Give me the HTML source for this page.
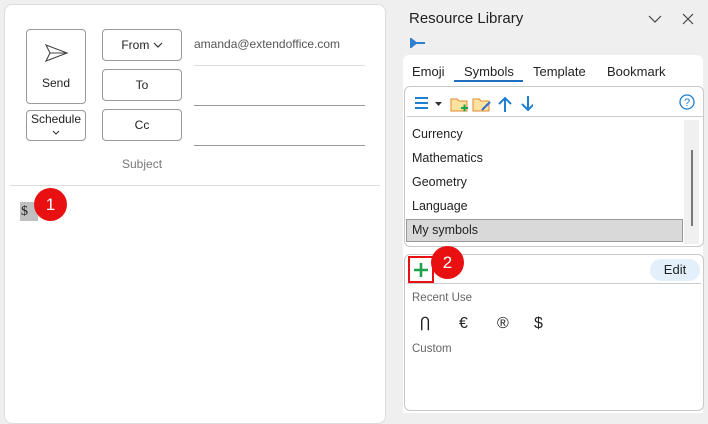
<!DOCTYPE html>
<html><head><style>
*{box-sizing:border-box;margin:0;padding:0}
body{width:708px;height:413px;background:#efefef;font-family:"Segoe UI","Liberation Sans",sans-serif;font-size:12px;color:#222;position:relative;overflow:hidden}
.a{position:absolute}
.card{left:4px;top:4px;width:382px;height:420px;background:#fff;border:1px solid #ddd;border-radius:8px}
.btn{position:absolute;border:1px solid #999;border-radius:4px;background:#fff;text-align:center;font-size:12px}
.line{position:absolute;height:1px;background:#999}
.box{position:absolute;border:1px solid #c8c8c8;border-radius:6px;background:#fff}
.item{position:absolute;left:412px;font-size:12.5px}
</style></head><body>
<div class="a card"></div>
<div class="btn" style="left:26px;top:29px;width:60px;height:75px">
<svg width="24" height="18" viewBox="0 0 24 18" style="position:absolute;left:18px;top:14px"><path d="M1 1 L22 9 L1 17 L5 9 Z M5 9 H22" fill="none" stroke="#444" stroke-width="1.1"/></svg>
<div style="position:absolute;top:46px;width:100%">Send</div></div>
<div class="btn" style="left:26px;top:110px;width:60px;height:31px;line-height:14px;padding-top:1px">Schedule<br><svg width="10" height="8"><path d="M2 2 L5 5 L8 2" fill="none" stroke="#333" stroke-width="1.1"/></svg></div>
<div class="btn" style="left:102px;top:29px;width:80px;height:32px;line-height:30px">From <svg width="10" height="8"><path d="M1 2 L5 6 L9 2" fill="none" stroke="#333" stroke-width="1.2"/></svg></div>
<div class="btn" style="left:102px;top:69px;width:80px;height:32px;line-height:30px">To</div>
<div class="btn" style="left:102px;top:109px;width:80px;height:32px;line-height:30px">Cc</div>
<div class="a" style="left:194px;top:37px;color:#555;font-size:12px">amanda@extendoffice.com</div>
<div class="line" style="left:194px;top:65px;width:171px;background:#ddd"></div>
<div class="line" style="left:194px;top:105px;width:171px"></div>
<div class="line" style="left:194px;top:145px;width:171px"></div>
<div class="a" style="left:122px;top:157px;color:#777">Subject</div>
<div class="line" style="left:10px;top:185px;width:370px;background:#ddd"></div>
<div class="a" style="left:20px;top:202px;width:18px;height:19px;background:#c0c0c0;font-family:'Liberation Serif',serif;font-size:14px;line-height:19px;padding-left:1px">$</div>
<div class="a" style="left:34px;top:188px;width:33px;height:33px;border-radius:50%;background:#e81010;color:#fff;font-size:17px;text-align:center;line-height:33px">1</div>

<div class="a" style="left:409px;top:10px;font-size:15px;color:#222">Resource Library</div>
<svg class="a" style="left:648px;top:14px" width="14" height="10"><path d="M1 2 L7 8 L13 2" fill="none" stroke="#444" stroke-width="1.2"/></svg>
<svg class="a" style="left:682px;top:13px" width="12" height="12"><path d="M1 1 L11 11 M11 1 L1 11" stroke="#444" stroke-width="1.2"/></svg>
<svg class="a" style="left:410px;top:38px" width="16" height="10"><path d="M1 1 V9 L6 5 Z M6 5 H15" fill="#2f7fd0" stroke="#2f7fd0" stroke-width="2"/></svg>
<div class="a" style="left:403px;top:55px;width:300px;height:358px;background:#fff;border-radius:6px 6px 0 0"></div>
<div class="a" style="left:412px;top:64px;font-size:13px">Emoji</div>
<div class="a" style="left:464px;top:64px;font-size:13px">Symbols</div>
<div class="a" style="left:454px;top:80px;width:69px;height:2px;background:#1f6fc0"></div>
<div class="a" style="left:533px;top:64px;font-size:13px">Template</div>
<div class="a" style="left:607px;top:64px;font-size:13px">Bookmark</div>
<div class="box" style="left:404px;top:86px;width:300px;height:161px"></div>
<svg class="a" style="left:413px;top:95px" width="120" height="18">
<path d="M2 3 H15 M2 8 H15 M2 13 H15" stroke="#1f7fd0" stroke-width="2"/>
<path d="M22 7 H29 L25.5 11 Z" fill="#333"/>
<path d="M38 4 H44 L46 6 H54 V16 H38 Z" fill="#fde2a0" stroke="#e08a2a"/>
<path d="M48 13 H55 M51.5 9.5 V16.5" stroke="#1aa34a" stroke-width="2"/>
<path d="M60 4 H66 L68 6 H76 V16 H60 Z" fill="#fde2a0" stroke="#e08a2a"/>
<path d="M69 15 L77 7" stroke="#2f6fd0" stroke-width="2"/>
<path d="M92 17 V3 M86 9 L92 3 L98 9" fill="none" stroke="#1f7fd0" stroke-width="2"/>
<path d="M115 1 V15 M109 9 L115 15 L121 9" fill="none" stroke="#1f7fd0" stroke-width="2"/>
</svg>
<svg class="a" style="left:679px;top:94px" width="16" height="16"><circle cx="8" cy="8" r="7" fill="none" stroke="#1f7fd0" stroke-width="1.3"/><text x="8" y="12" font-size="11" text-anchor="middle" fill="#1f7fd0" font-family="Liberation Sans">?</text></svg>
<div class="a" style="left:407px;top:116px;width:296px;height:1px;background:#ccc"></div>
<div class="a" style="left:684px;top:120px;width:15px;height:124px;background:#f0f0f0"></div>
<div class="a" style="left:691px;top:150px;width:2px;height:76px;background:#777"></div>
<div class="item" style="top:127px">Currency</div>
<div class="item" style="top:151px">Mathematics</div>
<div class="item" style="top:175px">Geometry</div>
<div class="item" style="top:199px">Language</div>
<div class="a" style="left:406px;top:219px;width:277px;height:23px;background:#d9d9d9;border:1px solid #999"></div>
<div class="item" style="top:223px">My symbols</div>
<div class="box" style="left:404px;top:254px;width:300px;height:157px"></div>
<div class="a" style="left:408px;top:256px;width:26px;height:27px;border:2px solid #e81010"></div>
<svg class="a" style="left:413px;top:262px" width="16" height="16"><path d="M8 1 V15 M1 8 H15" stroke="#1aa34a" stroke-width="2.6"/></svg>
<div class="a" style="left:431px;top:246px;width:33px;height:33px;border-radius:50%;background:#e81010;color:#fff;font-size:17px;text-align:center;line-height:33px">2</div>
<div class="a" style="left:650px;top:259px;width:50px;height:22px;border-radius:11px;background:#e3f0fb;text-align:center;line-height:22px;font-size:13px">Edit</div>
<div class="a" style="left:407px;top:283px;width:294px;height:1px;background:#ccc"></div>
<div class="a" style="left:412px;top:292px;color:#666;font-size:11.5px">Recent Use</div>
<div class="a" style="left:420px;top:315px;font-size:16px">Ⴖ</div>
<div class="a" style="left:459px;top:315px;font-size:16px">€</div>
<div class="a" style="left:497px;top:315px;font-size:16px">®</div>
<div class="a" style="left:534px;top:315px;font-size:16px">$</div>
<div class="a" style="left:412px;top:343px;color:#666;font-size:11.5px">Custom</div>
</body></html>
